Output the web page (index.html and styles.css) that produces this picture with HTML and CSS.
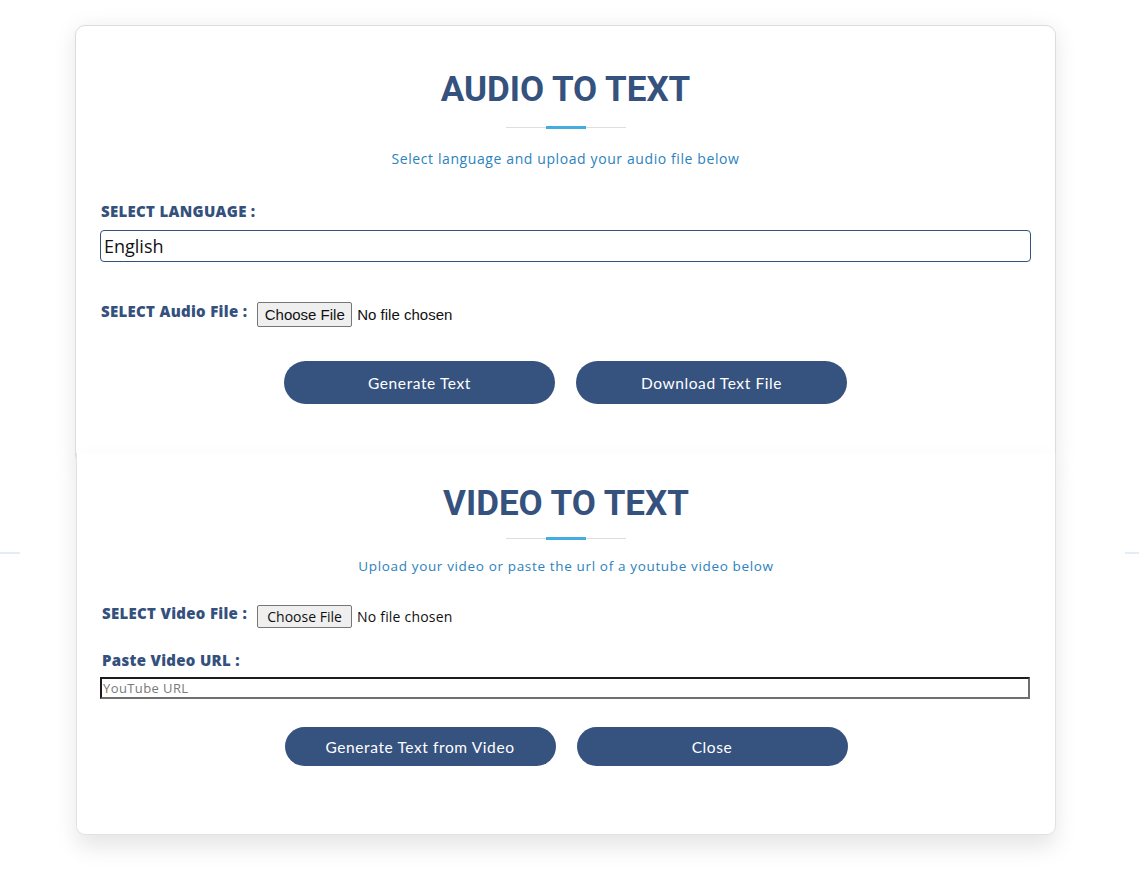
FILE: index.html
```html
<!DOCTYPE html>
<html lang="en">
<head>
<meta charset="utf-8">
<title>Audio to Text</title>
<link rel="stylesheet" href="styles.css">
</head>
<body>
<div class="page">
  <section class="card card-audio">
    <h1 class="title">AUDIO TO TEXT</h1>
    <div class="divider"></div>
    <p class="subtitle">Select language and upload your audio file below</p>
    <label class="label label-lang" for="lang">SELECT LANGUAGE :</label>
    <select id="lang" class="select">
      <option>English</option>
    </select>
    <div class="file-row file-row-audio">
      <span class="label">SELECT Audio File :</span>
      <input type="file" class="file file-audio">
    </div>
    <div class="actions actions-audio">
      <button class="btn">Generate Text</button>
      <button class="btn">Download Text File</button>
    </div>
  </section>
  <section class="card card-video">
    <h1 class="title">VIDEO TO TEXT</h1>
    <div class="divider"></div>
    <p class="subtitle subtitle-small">Upload your video or paste the url of a youtube video below</p>
    <div class="file-row file-row-video">
      <span class="label">SELECT Video File :</span>
      <input type="file" class="file file-video">
    </div>
    <label class="label label-url" for="url">Paste Video URL :</label>
    <input id="url" class="url" type="text" placeholder="YouTube URL">
    <div class="actions actions-video">
      <button class="btn">Generate Text from Video</button>
      <button class="btn">Close</button>
    </div>
  </section>
</div>
</body>
</html>
```
FILE: styles.css
```css
* { box-sizing: border-box; }

html, body {
  margin: 0;
  padding: 0;
}

body {
  background:
    linear-gradient(#e3edf9, #e3edf9) 0 552px / 20px 2px no-repeat,
    linear-gradient(#e3edf9, #e3edf9) 1125px 552px / 14px 2px no-repeat,
    #ffffff;
  font-family: "Open Sans", "Noto Sans", sans-serif;
  color: #222;
}

.page {
  padding: 25px 0 40px 75px;
}

.card {
  background: #fff;
  display: flex;
  flex-direction: column;
}

.card-audio {
  width: 981px;
  border: 1px solid #dcdcdc;
  border-radius: 10px;
  padding: 44px 24px 60px 24px;
  box-shadow: 0 4px 22px rgba(0, 0, 0, 0.10);
}

.card-video {
  position: relative;
  z-index: 1;
  width: 980px;
  margin-left: 1px;
  margin-top: -12px;
  border: 1px solid #e2e2e2;
  border-top: none;
  border-radius: 0 0 9px 9px;
  padding: 31px 23px 68px 23px;
  box-shadow: 0 12px 22px rgba(0, 0, 0, 0.10);
}

.title {
  margin: 0;
  height: 40px;
  line-height: 40px;
  text-align: center;
  font-family: Roboto, "Liberation Sans", sans-serif;
  font-weight: 700;
  font-size: 35px;
  color: #35517e;
  letter-spacing: 0;
}

.divider {
  align-self: center;
  width: 120px;
  height: 3px;
  margin-top: 16px;
  background: linear-gradient(#fff, #fff) 0 0 / 100% 1px no-repeat,
              linear-gradient(#dedede, #dedede) 0 1px / 100% 1px no-repeat;
  display: flex;
  justify-content: center;
}

.divider::after {
  content: "";
  width: 40px;
  height: 3px;
  background: #45ace1;
}

.card-video .divider {
  margin-top: 13px;
}

.subtitle {
  margin: 20px 0 0 0;
  line-height: 20px;
  text-align: center;
  font-size: 14px;
  letter-spacing: 0.6px;
  color: #2c82bd;
}

.subtitle-small {
  margin-top: 16px;
  font-size: 13.5px;
  letter-spacing: 0.65px;
}

.label {
  font-family: "Open Sans", "Noto Sans", sans-serif;
  font-weight: 800;
  font-size: 15px;
  letter-spacing: 0.3px;
  line-height: 20px;
  color: #34507c;
  white-space: nowrap;
}

.label-lang {
  margin-top: 32px;
  padding-left: 1px;
}

.select {
  margin-top: 9px;
  width: 931px;
  height: 32px;
  border: 1px solid #35517e;
  border-radius: 4px;
  padding: 0 0 0 3px;
  font-family: "Open Sans", "Noto Sans", sans-serif;
  font-size: 18px;
  color: #111;
  background: #fff;
  appearance: none;
  -webkit-appearance: none;
  outline: none;
}

.file-row {
  display: flex;
  align-items: flex-start;
  gap: 10px;
}

.file-row-audio {
  margin-top: 40px;
  height: 25px;
  padding-left: 1px;
}

.file-row-audio .label {
  margin-top: -1px;
}

.file {
  color: #111;
  padding: 0;
}

.file::file-selector-button {
  width: 95px;
  margin: 0 5px 0 0;
  padding: 0;
  border: 1px solid #767676;
  border-radius: 2px;
  background: #efefef;
  color: #111;
  font: inherit;
}

.file-audio {
  height: 25px;
  font-family: "Liberation Sans", Arial, sans-serif;
  font-size: 15px;
}

.file-audio::file-selector-button {
  height: 25px;
}

.file-row-video {
  margin-top: 29px;
  height: 23px;
  padding-left: 2px;
}

.file-row-video .label {
  line-height: 16px;
}

.file-video {
  height: 23px;
  font-family: "Open Sans", "Noto Sans", sans-serif;
  font-size: 14px;
  letter-spacing: 0.2px;
}

.file-video::file-selector-button {
  height: 23px;
}

.label-url {
  margin-top: 22px;
  padding-left: 2px;
}

.url {
  margin-top: 7px;
  width: 930px;
  height: 22px;
  padding: 0 0 0 1px;
  border-style: solid;
  border-width: 2px;
  border-color: #1c1c1c #6f6f6f #6f6f6f #1c1c1c;
  border-radius: 0;
  font-family: "Open Sans", "Noto Sans", sans-serif;
  font-size: 13px;
  letter-spacing: 0.4px;
  outline: none;
}

.url::placeholder {
  color: #7a7a7a;
}

.actions {
  display: flex;
  justify-content: center;
  gap: 21px;
}

.actions-audio {
  margin-top: 34px;
}

.actions-video {
  margin-top: 28px;
}

.btn {
  width: 271px;
  height: 43px;
  border: none;
  border-radius: 22px;
  background: #36527e;
  color: #fff;
  font-family: Lato, "Noto Sans", sans-serif;
  font-size: 15.5px;
  letter-spacing: 0.6px;
  cursor: pointer;
}

.actions-video .btn {
  height: 39px;
  border-radius: 20px;
}
```
